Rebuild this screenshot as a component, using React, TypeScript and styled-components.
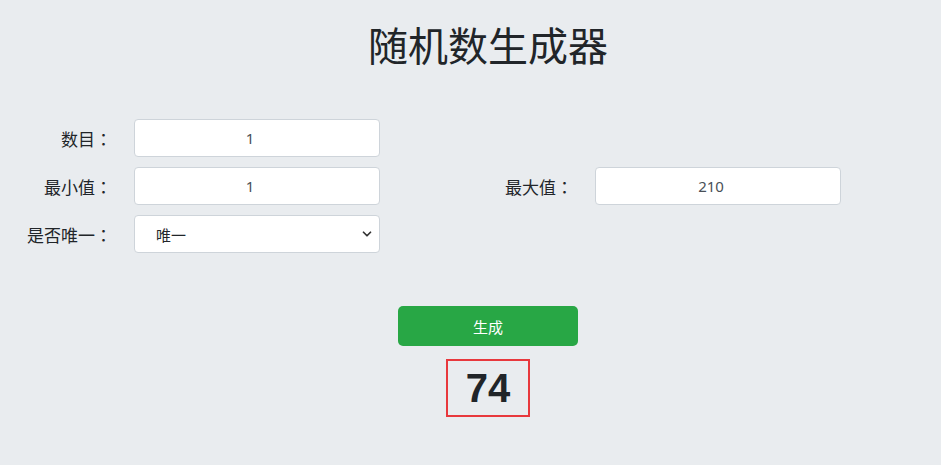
import React, { useState } from 'react';
import styled, { createGlobalStyle } from 'styled-components';
import { ChevronDown } from 'lucide-react';

const GlobalStyle = createGlobalStyle`
  html, body {
    margin: 0;
    padding: 0;
    background: #e9ecef;
    overflow-x: hidden;
  }
  body {
    font-family: "Noto Sans", "Noto Sans CJK SC", sans-serif;
    color: #212529;
  }
`;

const Container = styled.div`
  width: 922px;
  margin-left: 27px;
  padding-top: 20px;
  display: flex;
  flex-direction: column;
  align-items: center;
`;

const Title = styled.h1`
  margin: 0 0 51px;
  font-family: "Noto Sans CJK SC", sans-serif;
  font-size: 40px;
  font-weight: 400;
  line-height: 48px;
  color: #212529;
`;

const Form = styled.div`
  align-self: stretch;
  display: flex;
  flex-direction: column;
  gap: 10px;
`;

const Row = styled.div`
  display: flex;
`;

const Field = styled.div`
  width: 461px;
  display: flex;
  align-items: center;
`;

const Label = styled.label`
  width: 85px;
  margin-right: 22px;
  text-align: right;
  white-space: nowrap;
  font-family: "Noto Sans CJK SC", sans-serif;
  font-size: 17px;
  color: #212529;
`;

// centred full-width colon, as the reference's CJK font draws it
const Colon = styled.span`
  font-family: "Noto Sans CJK JP", sans-serif;
`;

const Input = styled.input`
  box-sizing: border-box;
  width: 246px;
  height: 38px;
  padding: 0 26px 0 12px;
  border: 1px solid #ced4da;
  border-radius: 4px;
  background: #fff;
  text-align: center;
  font-family: "Noto Sans", "Noto Sans CJK SC", sans-serif;
  font-size: 15px;
  color: #495057;
  outline: none;
`;

const SelectWrap = styled.div`
  position: relative;
  width: 246px;
  height: 38px;
  svg {
    position: absolute;
    right: 6px;
    top: 12px;
    pointer-events: none;
    color: #333;
  }
`;

const Select = styled.select`
  box-sizing: border-box;
  width: 100%;
  height: 38px;
  padding: 0 12px 0 21px;
  border: 1px solid #ced4da;
  border-radius: 4px;
  background: #fff;
  appearance: none;
  font-family: "Noto Sans CJK SC", sans-serif;
  font-size: 15px;
  color: #212529;
  outline: none;
`;

const GenerateButton = styled.button`
  margin-top: 53px;
  width: 180px;
  height: 40px;
  border: none;
  border-radius: 5px;
  background: #28a745;
  color: #fff;
  font-family: "Noto Sans CJK SC", sans-serif;
  font-size: 15px;
  cursor: pointer;
`;

const Result = styled.div`
  margin-top: 13px;
  padding: 0 18px;
  border: 2px solid #e8383d;
  font-family: "Liberation Sans", Arial, sans-serif;
  font-size: 40px;
  font-weight: 700;
  line-height: 54px;
  color: #212529;
`;

export default function App() {
  const [count, setCount] = useState('1');
  const [min, setMin] = useState('1');
  const [max, setMax] = useState('210');
  const [unique, setUnique] = useState('yes');
  const [result, setResult] = useState<number[]>([74]);

  const generate = () => {
    const lo = Number(min);
    const hi = Number(max);
    const n = Math.max(1, Number(count) || 1);
    const out: number[] = [];
    while (out.length < n && out.length <= hi - lo) {
      const v = lo + Math.floor(Math.random() * (hi - lo + 1));
      if (unique === 'yes' && out.includes(v)) continue;
      out.push(v);
    }
    setResult(out);
  };

  return (
    <>
      <GlobalStyle />
      <Container>
        <Title>随机数生成器</Title>
        <Form>
          <Row>
            <Field>
              <Label>数目<Colon>：</Colon></Label>
              <Input value={count} onChange={(e) => setCount(e.target.value)} />
            </Field>
          </Row>
          <Row>
            <Field>
              <Label>最小值<Colon>：</Colon></Label>
              <Input value={min} onChange={(e) => setMin(e.target.value)} />
            </Field>
            <Field>
              <Label>最大值<Colon>：</Colon></Label>
              <Input value={max} onChange={(e) => setMax(e.target.value)} />
            </Field>
          </Row>
          <Row>
            <Field>
              <Label>是否唯一<Colon>：</Colon></Label>
              <SelectWrap>
                <Select value={unique} onChange={(e) => setUnique(e.target.value)}>
                  <option value="yes">唯一</option>
                  <option value="no">不唯一</option>
                </Select>
                <ChevronDown size={14} strokeWidth={3} />
              </SelectWrap>
            </Field>
          </Row>
        </Form>
        <GenerateButton onClick={generate}>生成</GenerateButton>
        <Result>{result.join(', ')}</Result>
      </Container>
    </>
  );
}
